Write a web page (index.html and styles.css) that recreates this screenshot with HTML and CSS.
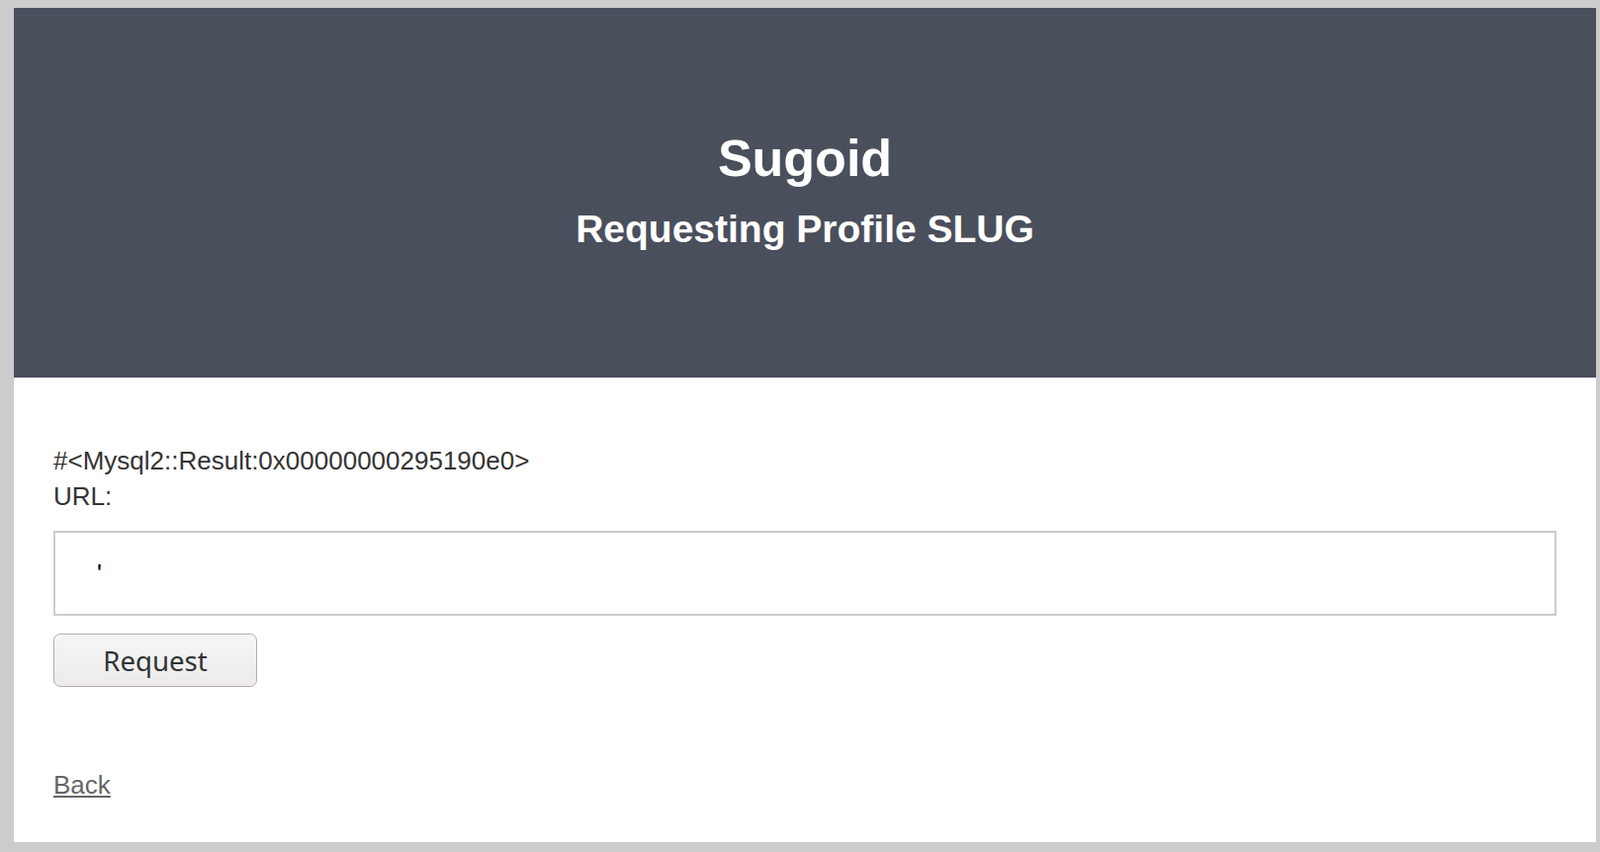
FILE: index.html
```html
<!DOCTYPE html>
<html>
<head>
<meta charset="utf-8">
<title>Sugoid</title>
<link rel="stylesheet" href="styles.css">
</head>
<body>
<div class="page">
  <header class="hero">
    <h1 class="hero-title">Sugoid</h1>
    <h2 class="hero-sub">Requesting Profile SLUG</h2>
  </header>
  <main class="content">
    <p class="result">#&lt;Mysql2::Result:0x00000000295190e0&gt;<br>URL:</p>
    <form class="req-form">
      <input class="url-input" type="text" value="'">
      <button class="req-btn" type="button">Request</button>
    </form>
    <p class="back-row"><a class="back" href="#">Back</a></p>
  </main>
</div>
</body>
</html>
```
FILE: styles.css
```css
html, body {
  margin: 0;
}
body {
  background: #cccccc;
  padding: 8px 4px 10px 14px;
  font-family: "Liberation Sans", Arial, sans-serif;
}
.page {
  background: #ffffff;
}
.hero {
  background: #4a4f5c;
  color: #ffffff;
  text-align: center;
  padding: 122px 0 128px;
}
.hero-title {
  margin: 0;
  font-size: 52px;
  line-height: 60px;
  font-weight: bold;
}
.hero-sub {
  margin: 20px 0 0;
  font-size: 39px;
  line-height: 44px;
  font-weight: bold;
}
.content {
  padding: 66px 40px 40px;
  font-size: 26px;
  line-height: 36px;
  color: #333333;
}
.result {
  margin: 0;
}
.req-form {
  margin: 17px 0 0;
}
.url-input {
  display: block;
  width: 100%;
  box-sizing: border-box;
  height: 86px;
  border: 2px solid #cccccc;
  padding: 0 42px;
  margin: 0;
  font-family: "Liberation Sans", Arial, sans-serif;
  font-size: 26px;
  color: #000000;
  background: #ffffff;
  outline: none;
}
.req-btn {
  display: block;
  margin: 18px 0 0;
  width: 206px;
  height: 54px;
  box-sizing: border-box;
  border: 1px solid #b4afa9;
  border-radius: 7px;
  background: linear-gradient(#f7f6f5, #edebe9);
  font-family: "Noto Sans", sans-serif;
  font-size: 27.6px;
  color: #2e3436;
  padding: 0;
}
.back-row {
  margin: 81px 0 0;
}
.back {
  color: #666666;
  text-decoration: underline;
}
```
